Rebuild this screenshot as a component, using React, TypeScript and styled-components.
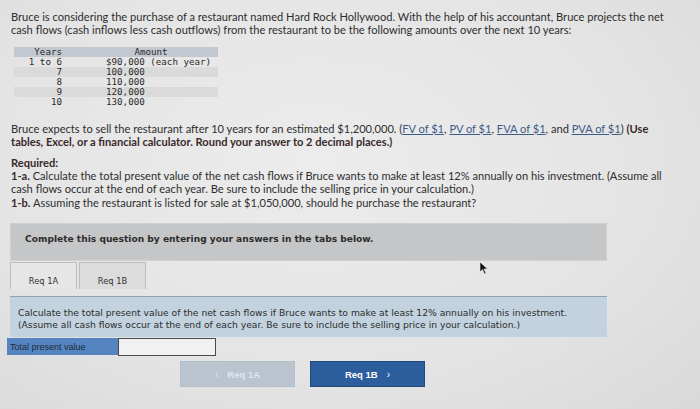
import React from "react";
import styled, { createGlobalStyle } from "styled-components";

const Global = createGlobalStyle`
  html, body { margin: 0; padding: 0; }
  body {
    width: 700px;
    height: 409px;
    overflow: hidden;
    background: radial-gradient(ellipse at 45% 40%, #ececec 0%, #e4e4e4 60%, #d9d9d9 100%);
    font-family: Lato, "Open Sans", sans-serif;
    color: #2b2b2b;
  }
`;

const Page = styled.div`
  position: relative;
  padding: 10px 10px 0 11px;
  display: flex;
  flex-direction: column;
`;

const Para = styled.p<{ $mt?: number }>`
  margin: ${(p) => p.$mt ?? 0}px 0 0 0;
  font-size: 11.1px;
  line-height: 13.4px;
  color: #2e2e2e;
  max-width: 664px;
`;

const Strong = styled.span`
  font-weight: 700;
  color: #3a2a2c;
`;

const Link = styled.span`
  color: #3d5b86;
  text-decoration: underline;
`;

const Table = styled.div`
  margin: 10px 0 0 3px;
  width: 204px;
  display: grid;
  grid-template-columns: 52px 1fr;
  font-family: "DejaVu Sans Mono", "Liberation Mono", monospace;
  font-size: 9.2px;
  line-height: 10px;
  color: #2a2a2a;
`;

const Row = styled.div<{ $tone: "head" | "shade" | "plain" }>`
  display: contents;
  & > span {
    background: ${(p) =>
      p.$tone === "head" ? "#c3c7cf" : p.$tone === "shade" ? "#dadada" : "transparent"};
  }
`;

const YearCell = styled.span`
  text-align: right;
  padding-right: 4px;
`;

const AmountCell = styled.span<{ $center?: boolean }>`
  padding-left: ${(p) => (p.$center ? 18 : 40)}px;
  text-align: ${(p) => (p.$center ? "center" : "left")};
  white-space: pre;
`;

const InstructionBar = styled.div`
  margin: 14px 0 0 -1px;
  width: 597px;
  height: 38px;
  background: #c5c6c7;
  display: flex;
  align-items: center;
  padding: 0 0 7px 14px;
  box-sizing: border-box;
  font-family: "DejaVu Sans", Verdana, sans-serif;
  font-weight: 700;
  font-size: 9.1px;
  color: #2c2c2c;
  border: 1px solid #cfd0d0;
`;

const Tabs = styled.div`
  margin: 1px 0 0 -1px;
  display: flex;
  gap: 2px;
`;

const Tab = styled.div<{ $active?: boolean }>`
  width: 67px;
  height: 27px;
  box-sizing: border-box;
  border: 1px solid #bdbdbd;
  border-bottom: none;
  background: ${(p) => (p.$active ? "#e6e6e6" : "#dcdcdc")};
  display: flex;
  align-items: center;
  justify-content: center;
  padding-top: 10px;
  font-family: "DejaVu Sans", Verdana, sans-serif;
  font-size: 8.3px;
  color: #333;
`;

const InfoBox = styled.div`
  margin: 7px 0 0 -1px;
  width: 597px;
  height: 41px;
  box-sizing: border-box;
  background: #c2d3df;
  border-top: 1px solid #8fa4b3;
  padding: 10px 0 0 8px;
  font-family: "DejaVu Sans", Verdana, sans-serif;
  font-size: 9.2px;
  line-height: 12px;
  color: #2c2c2c;
`;

const AnswerRow = styled.div`
  margin: 1px 0 0 -4px;
  display: flex;
  height: 17px;
`;

const AnswerLabel = styled.div`
  width: 111px;
  background: #5585c0;
  display: flex;
  align-items: center;
  padding-left: 3px;
  box-sizing: border-box;
  font-family: "Liberation Sans", Arial, sans-serif;
  font-size: 9px;
  color: #1e2a3a;
`;

const AnswerInput = styled.input`
  width: 98px;
  height: 18px;
  box-sizing: border-box;
  border: 1.5px solid #4a4a4a;
  background: #f1f1f1;
  padding: 0;
  outline: none;
`;

const Nav = styled.div`
  margin: 6px 0 0 169px;
  display: flex;
  gap: 15px;
`;

const NavButton = styled.div<{ $primary?: boolean }>`
  width: 115px;
  height: 26px;
  box-sizing: border-box;
  display: flex;
  align-items: center;
  justify-content: center;
  gap: 9px;
  background: ${(p) => (p.$primary ? "#2c5d9c" : "#b9c4cf")};
  color: ${(p) => (p.$primary ? "#ffffff" : "#dfe6ee")};
  border: 1px solid ${(p) => (p.$primary ? "#23487a" : "#b3bfca")};
  font-family: "Liberation Sans", Arial, sans-serif;
  font-weight: 700;
  font-size: 9.5px;
`;

const Chevron = styled.span`
  font-size: 10px;
  font-weight: 400;
`;

const Cursor = styled.svg`
  position: absolute;
  left: 479px;
  top: 261px;
`;

const rows: { year: string; amount: string; tone: "shade" | "plain" }[] = [
  { year: "1 to 6", amount: "$90,000 (each year)", tone: "plain" },
  { year: "7", amount: "100,000", tone: "shade" },
  { year: "8", amount: "110,000", tone: "plain" },
  { year: "9", amount: "120,000", tone: "shade" },
  { year: "10", amount: "130,000", tone: "plain" },
];

export default function App() {
  return (
    <>
      <Global />
      <Page>
        <Para>
          Bruce is considering the purchase of a restaurant named Hard Rock Hollywood. With the help of his accountant, Bruce projects the net cash flows (cash inflows less cash outflows) from the restaurant to be the following amounts over the next 10 years:
        </Para>
        <Table>
          <Row $tone="head">
            <YearCell>Years</YearCell>
            <AmountCell $center>Amount</AmountCell>
          </Row>
          {rows.map((r) => (
            <Row key={r.year} $tone={r.tone}>
              <YearCell>{r.year}</YearCell>
              <AmountCell>{r.amount}</AmountCell>
            </Row>
          ))}
        </Table>
        <Para $mt={15}>
          Bruce expects to sell the restaurant after 10 years for an estimated $1,200,000. (<Link>FV of $1</Link>, <Link>PV of $1</Link>, <Link>FVA of $1</Link>, and <Link>PVA of $1</Link>) <Strong>(Use tables, Excel, or a financial calculator. Round your answer to 2 decimal places.)</Strong>
        </Para>
        <Para $mt={7}>
          <Strong>Required:</Strong>
          <br />
          <Strong>1-a.</Strong> Calculate the total present value of the net cash flows if Bruce wants to make at least 12% annually on his investment. (Assume all cash flows occur at the end of each year. Be sure to include the selling price in your calculation.)
          <br />
          <Strong>1-b.</Strong> Assuming the restaurant is listed for sale at $1,050,000, should he purchase the restaurant?
        </Para>
        <InstructionBar>Complete this question by entering your answers in the tabs below.</InstructionBar>
        <Tabs>
          <Tab $active>Req 1A</Tab>
          <Tab>Req 1B</Tab>
        </Tabs>
        <InfoBox>
          Calculate the total present value of the net cash flows if Bruce wants to make at least 12% annually on his investment.
          <br />
          (Assume all cash flows occur at the end of each year. Be sure to include the selling price in your calculation.)
        </InfoBox>
        <AnswerRow>
          <AnswerLabel>Total present value</AnswerLabel>
          <AnswerInput aria-label="Total present value" />
        </AnswerRow>
        <Nav>
          <NavButton>
            <Chevron>‹</Chevron>Req 1A
          </NavButton>
          <NavButton $primary>
            Req 1B<Chevron>›</Chevron>
          </NavButton>
        </Nav>
        <Cursor width="10" height="14" viewBox="0 0 10 14">
          <path d="M1 1 L1 11 L3.5 8.5 L5.5 13 L7 12.3 L5 8 L8.5 8 Z" fill="#111" stroke="#eee" strokeWidth="0.6" />
        </Cursor>
      </Page>
    </>
  );
}
